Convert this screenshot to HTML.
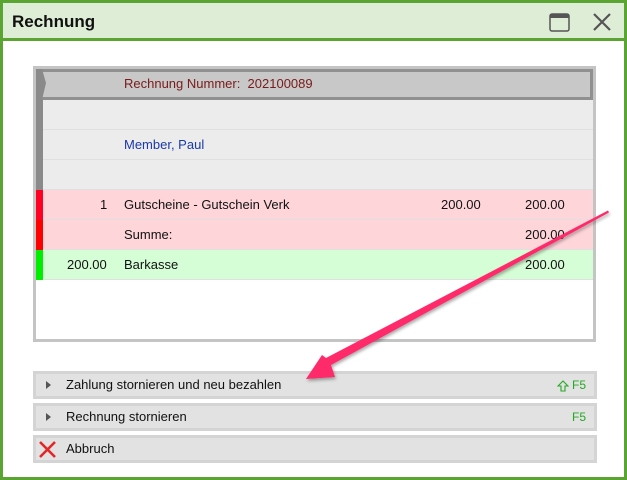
<!DOCTYPE html>
<html><head><meta charset="utf-8"><style>
*{margin:0;padding:0;box-sizing:border-box}
body{width:627px;height:480px;overflow:hidden;background:#fff;font-family:"Liberation Sans",sans-serif;font-size:12px;position:relative}
.win{position:absolute;left:0;top:0;width:627px;height:480px;border:3px solid #5aa532;background:#fff}
.title{position:absolute;left:0;top:0;width:621px;height:38px;background:#deedd6;border-bottom:3px solid #5aa532}
.title span{position:absolute;left:9px;top:9px;font-size:17px;font-weight:bold;color:#111}
.tbl{position:absolute;left:33px;top:66px;width:563px;height:276px;border:3px solid #c4c4c4;background:#fff}
.hdr{position:absolute;left:0;top:0;width:557px;height:31px;background:#c8c8c8;border:3px solid #909090}
.row{position:absolute;left:0;width:557px;height:29px;border-bottom:1px solid #e0e0e0}
.stripe{position:absolute;left:0;top:0;width:7px;height:30px}
.t{position:absolute;top:7px;color:#111;font-size:13px}
.btn{position:absolute;left:33px;width:564px;height:28px;background:#e2e2e2;border:3px solid #d4d4d4}
.btn .l{position:absolute;left:30px;top:3px;font-size:13px;color:#111}
.btn .f{position:absolute;right:8px;top:4px;color:#22aa22;font-size:12px}
.tri{position:absolute;left:10px;top:7px;width:0;height:0;border-left:5px solid #555;border-top:4px solid transparent;border-bottom:4px solid transparent}
</style></head><body>
<div class="win">
<div class="title"><span>Rechnung</span>
<svg style="position:absolute;left:546px;top:10px" width="22" height="20"><rect x="1" y="1" width="19" height="17" rx="2" fill="none" stroke="#555" stroke-width="1.5"/><rect x="1" y="1" width="19" height="4" fill="#555"/></svg>
<svg style="position:absolute;left:589px;top:9px" width="20" height="20"><path d="M2 2L18 18M18 2L2 18" stroke="#555" stroke-width="2.2"/></svg>
</div>
</div>
<div class="tbl">
<div class="row" style="top:31px;height:30px;background:#ececec"><div class="stripe" style="background:#8a8a8a"></div></div>
<div class="row" style="top:61px;height:30px;background:#ececec"><div class="stripe" style="background:#8a8a8a"></div><span class="t" style="left:88px;color:#1a3aa8">Member, Paul</span></div>
<div class="row" style="top:91px;height:30px;background:#ececec"><div class="stripe" style="background:#8a8a8a"></div></div>
<div class="row" style="top:121px;height:30px;background:#fed6da"><div class="stripe" style="background:#ff0022"></div><span class="t" style="left:64px">1</span><span class="t" style="left:88px">Gutscheine - Gutschein Verk</span><span class="t" style="left:405px">200.00</span><span class="t" style="left:489px">200.00</span></div>
<div class="row" style="top:151px;height:30px;background:#fed6da"><div class="stripe" style="background:#ff0000"></div><span class="t" style="left:88px">Summe:</span><span class="t" style="left:489px">200.00</span></div>
<div class="row" style="top:181px;height:30px;background:#d6fed6"><div class="stripe" style="background:#00ee00"></div><span class="t" style="left:31px">200.00</span><span class="t" style="left:88px">Barkasse</span><span class="t" style="left:489px">200.00</span></div>
<div class="hdr"><svg style="position:absolute;left:-3px;top:-3px" width="12" height="31"><path d="M0 0H6L10 14L6 31H0Z" fill="#8a8a8a"/></svg><span style="position:absolute;left:85px;top:4px;color:#7a1a1a;font-size:13px">Rechnung Nummer:&nbsp; 202100089</span></div>
</div>
<div class="btn" style="top:371px"><div class="tri"></div><span class="l">Zahlung stornieren und neu bezahlen</span>
<svg style="position:absolute;left:521px;top:6px" width="12" height="12"><path d="M6 1L11 6H8V11H4V6H1Z" fill="none" stroke="#22aa22" stroke-width="1.1"/></svg><span class="f">F5</span></div>
<div class="btn" style="top:403px"><div class="tri"></div><span class="l">Rechnung stornieren</span><span class="f">F5</span></div>
<div class="btn" style="top:435px"><svg style="position:absolute;left:2px;top:2px" width="20" height="20"><path d="M2 2L17 17M17 2L2 17" stroke="#e02828" stroke-width="2.6"/></svg><span class="l">Abbruch</span></div>
<svg style="position:absolute;left:0;top:0" width="627" height="480">
<defs><filter id="s"><feDropShadow dx="1" dy="2" stdDeviation="1.5" flood-opacity="0.35"/></filter></defs>
<path filter="url(#s)" fill="#fe2b6a" d="M608 210.5L609 212.5L331 365L335 377L306 379L322 355L326 358Z"/>
</svg>
</body></html>
